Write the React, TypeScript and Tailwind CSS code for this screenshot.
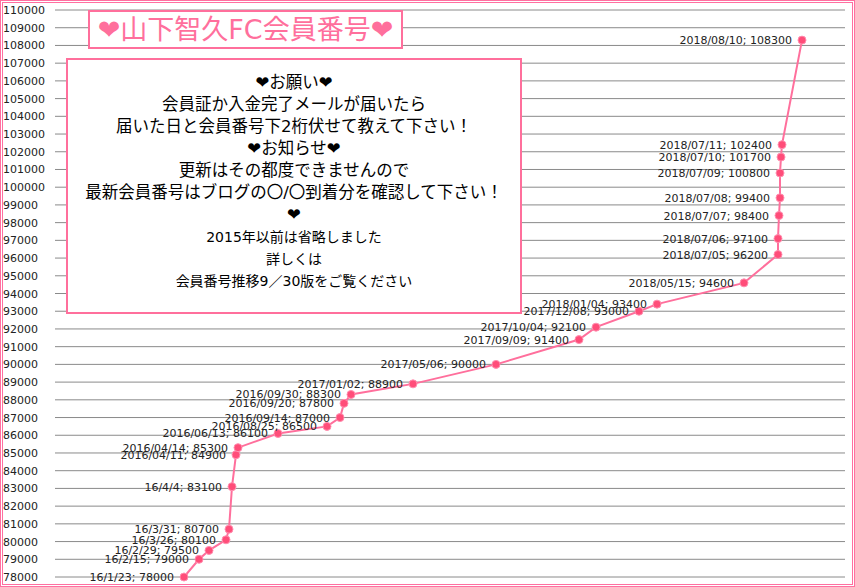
import React from 'react';

const pts: [string, number, number][] = [
  ['16/1/23; 78000', 78000, 184],
  ['16/2/15; 79000', 79000, 199],
  ['16/2/29; 79500', 79500, 209],
  ['16/3/26; 80100', 80100, 226],
  ['16/3/31; 80700', 80700, 229],
  ['16/4/4; 83100', 83100, 232],
  ['2016/04/11; 84900', 84900, 236],
  ['2016/04/14; 85300', 85300, 238],
  ['2016/06/13; 86100', 86100, 278],
  ['2016/08/25; 86500', 86500, 327],
  ['2016/09/14; 87000', 87000, 340],
  ['2016/09/20; 87800', 87800, 344],
  ['2016/09/30; 88300', 88300, 351],
  ['2017/01/02; 88900', 88900, 413],
  ['2017/05/06; 90000', 90000, 496],
  ['2017/09/09; 91400', 91400, 579],
  ['2017/10/04; 92100', 92100, 596],
  ['2017/12/08; 93000', 93000, 639],
  ['2018/01/04; 93400', 93400, 657],
  ['2018/05/15; 94600', 94600, 744],
  ['2018/07/05; 96200', 96200, 778],
  ['2018/07/06; 97100', 97100, 778],
  ['2018/07/07; 98400', 98400, 779],
  ['2018/07/08; 99400', 99400, 780],
  ['2018/07/09; 100800', 100800, 780],
  ['2018/07/10; 101700', 101700, 781],
  ['2018/07/11; 102400', 102400, 782],
  ['2018/08/10; 108300', 108300, 802],
];

const yOf = (v: number) => 577 - (v - 78000) * (567 / 32000);
const ticks = Array.from({ length: 33 }, (_, i) => 78000 + i * 1000);

const App = () => {
  return (
    <div className="relative w-[855px] h-[587px] bg-white border-[3px] border-double border-[#ff6fa0] overflow-hidden" style={{ fontFamily: '"DejaVu Sans", "Noto Sans CJK JP", sans-serif' }}>
      <svg width="855" height="587" className="absolute left-[-3px] top-[-3px]">
        {ticks.map((t) => (
          <g key={t}>
            <line x1={55} x2={845} y1={yOf(t)} y2={yOf(t)} stroke="#8a8a8a" strokeWidth={1} />
            <text x={3} y={yOf(t) + 4} fontSize={11} fill="#222">{t}</text>
          </g>
        ))}
        <polyline points={pts.map((p) => `${p[2]},${yOf(p[1])}`).join(' ')} fill="none" stroke="#ff6f9c" strokeWidth={2} />
        {pts.map((p) => (
          <g key={p[0]}>
            <circle cx={p[2]} cy={yOf(p[1])} r={4} fill="#ff4d79" stroke="#ff8fb0" strokeWidth={1} />
            <text x={p[2] - 10} y={yOf(p[1]) + 4} textAnchor="end" fontSize={11} fill="#222">{p[0]}</text>
          </g>
        ))}
      </svg>
      <div className="absolute left-[85px] top-[7px] w-[315px] h-[39px] bg-white border-2 border-[#ff6f9c] flex items-center justify-center text-[27px] text-[#ff6f9c] leading-none">
        ❤山下智久FC会員番号❤
      </div>
      <div className="absolute left-[63px] top-[55px] w-[456px] h-[256px] bg-white border-2 border-[#ff6f9c] flex flex-col items-center justify-center text-[16.5px] leading-[22px] text-black pb-[8px]">
        <div>❤お願い❤</div>
        <div>会員証か入金完了メールが届いたら</div>
        <div>届いた日と会員番号下2桁伏せて教えて下さい！</div>
        <div>❤お知らせ❤</div>
        <div>更新はその都度できませんので</div>
        <div>最新会員番号はブログの〇/〇到着分を確認して下さい！</div>
        <div>❤</div>
        <div className="text-[14px]">2015年以前は省略しました</div>
        <div className="text-[14px]">詳しくは</div>
        <div className="text-[14px]">会員番号推移9／30版をご覧ください</div>
      </div>
    </div>
  );
};

export default App;
